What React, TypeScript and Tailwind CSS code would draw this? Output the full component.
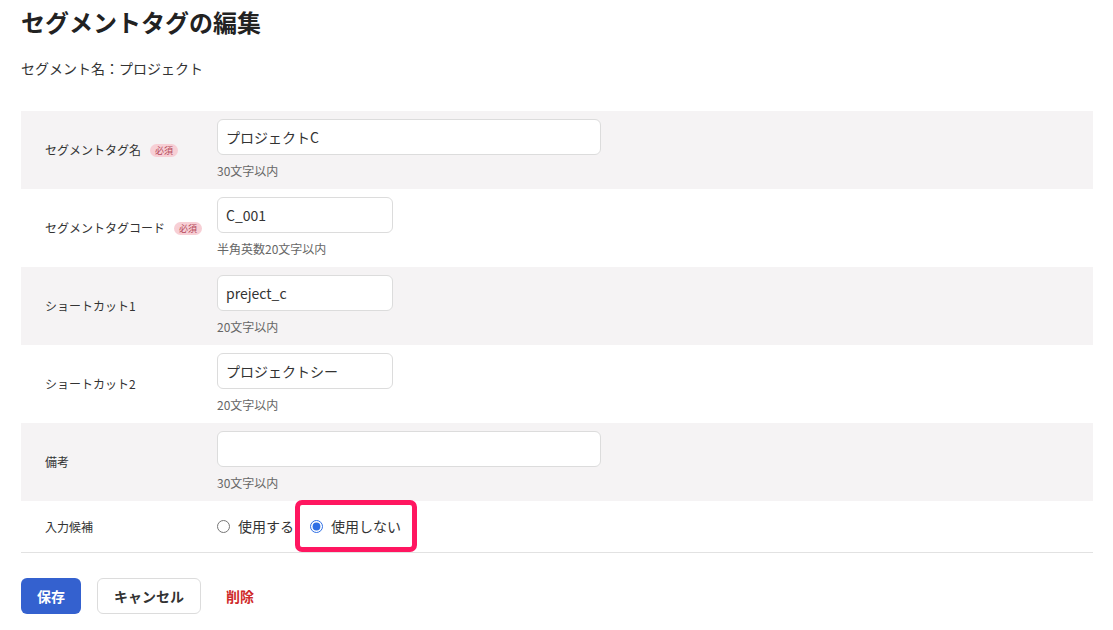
import { useState } from 'react';

type Field = {
  label: string;
  required?: boolean;
  value: string;
  hint: string;
  wide?: boolean;
};

const fields: Field[] = [
  { label: 'セグメントタグ名', required: true, value: 'プロジェクトC', hint: '30文字以内', wide: true },
  { label: 'セグメントタグコード', required: true, value: 'C_001', hint: '半角英数20文字以内' },
  { label: 'ショートカット1', value: 'preject_c', hint: '20文字以内' },
  { label: 'ショートカット2', value: 'プロジェクトシー', hint: '20文字以内' },
  { label: '備考', value: '', hint: '30文字以内', wide: true },
];

function RequiredBadge() {
  return (
    <span className="ml-[9px] inline-flex h-[13px] w-[28px] items-center justify-center rounded-full bg-[#f7cfd5] text-[9px] leading-none text-[#b5485a]">
      必須
    </span>
  );
}

export default function App() {
  const [useSuggest, setUseSuggest] = useState<'yes' | 'no'>('no');

  return (
    <div
      className="min-h-screen bg-white px-[21px] pt-[4px] text-[#333]"
      style={{ fontFamily: '"Noto Sans CJK JP", "Noto Sans", sans-serif' }}
    >
      {/* Header */}
      <h1 className="text-[24px] font-bold leading-[36px] text-[#222]">セグメントタグの編集</h1>
      <p className="mt-[18px] text-[14px] leading-[20px]">セグメント名：プロジェクト</p>

      {/* Form table */}
      <div className="mt-[33px] w-[1072px]">
        {fields.map((f, i) => (
          <div
            key={f.label}
            className={`flex h-[78px] ${i % 2 === 0 ? 'bg-[#f5f3f4]' : 'bg-white'}`}
          >
            <div className="flex w-[196px] items-center pl-[24px] text-[12px]">
              <span>{f.label}</span>
              {f.required && <RequiredBadge />}
            </div>
            <div className="flex flex-col pt-[8px]">
              <input
                type="text"
                defaultValue={f.value}
                className={`h-[36px] rounded-[6px] border border-[#dcdcdc] bg-white px-[8px] text-[14px] text-[#333] outline-none ${
                  f.wide ? 'w-[384px]' : 'w-[176px]'
                }`}
              />
              <span className="mt-[8px] text-[12px] leading-[16px] text-[#666]">{f.hint}</span>
            </div>
          </div>
        ))}

        {/* Suggest row */}
        <div className="flex h-[52px] border-b border-[#e2e2e2]">
          <div className="flex w-[196px] items-center pl-[24px] text-[12px]">入力候補</div>
          <div className="flex items-center text-[14px]">
            <label className="flex items-center">
              <input
                type="radio"
                name="suggest"
                checked={useSuggest === 'yes'}
                onChange={() => setUseSuggest('yes')}
                className="h-[13px] w-[13px] accent-[#2f6fe4]"
              />
              <span className="ml-[8px]">使用する</span>
            </label>
            <label className="relative ml-[16px] flex items-center">
              <input
                type="radio"
                name="suggest"
                checked={useSuggest === 'no'}
                onChange={() => setUseSuggest('no')}
                className="h-[13px] w-[13px] accent-[#2f6fe4]"
              />
              <span className="ml-[8px]">使用しない</span>
              <span className="pointer-events-none absolute -bottom-[15px] -left-[15px] -right-[16px] -top-[16px] rounded-[7px] border-[5px] border-[#ff1660]" />
            </label>
          </div>
        </div>
      </div>

      {/* Actions */}
      <div className="mt-[25px] flex items-center">
        <button className="h-[36px] w-[60px] rounded-[6px] bg-[#3461cf] text-[14px] font-bold text-white">
          保存
        </button>
        <button className="ml-[16px] h-[36px] w-[104px] rounded-[6px] border border-[#dcdcdc] bg-white text-[14px] font-bold text-[#333]">
          キャンセル
        </button>
        <button className="ml-[25px] text-[14px] font-bold text-[#cf2a2a]">削除</button>
      </div>
    </div>
  );
}
